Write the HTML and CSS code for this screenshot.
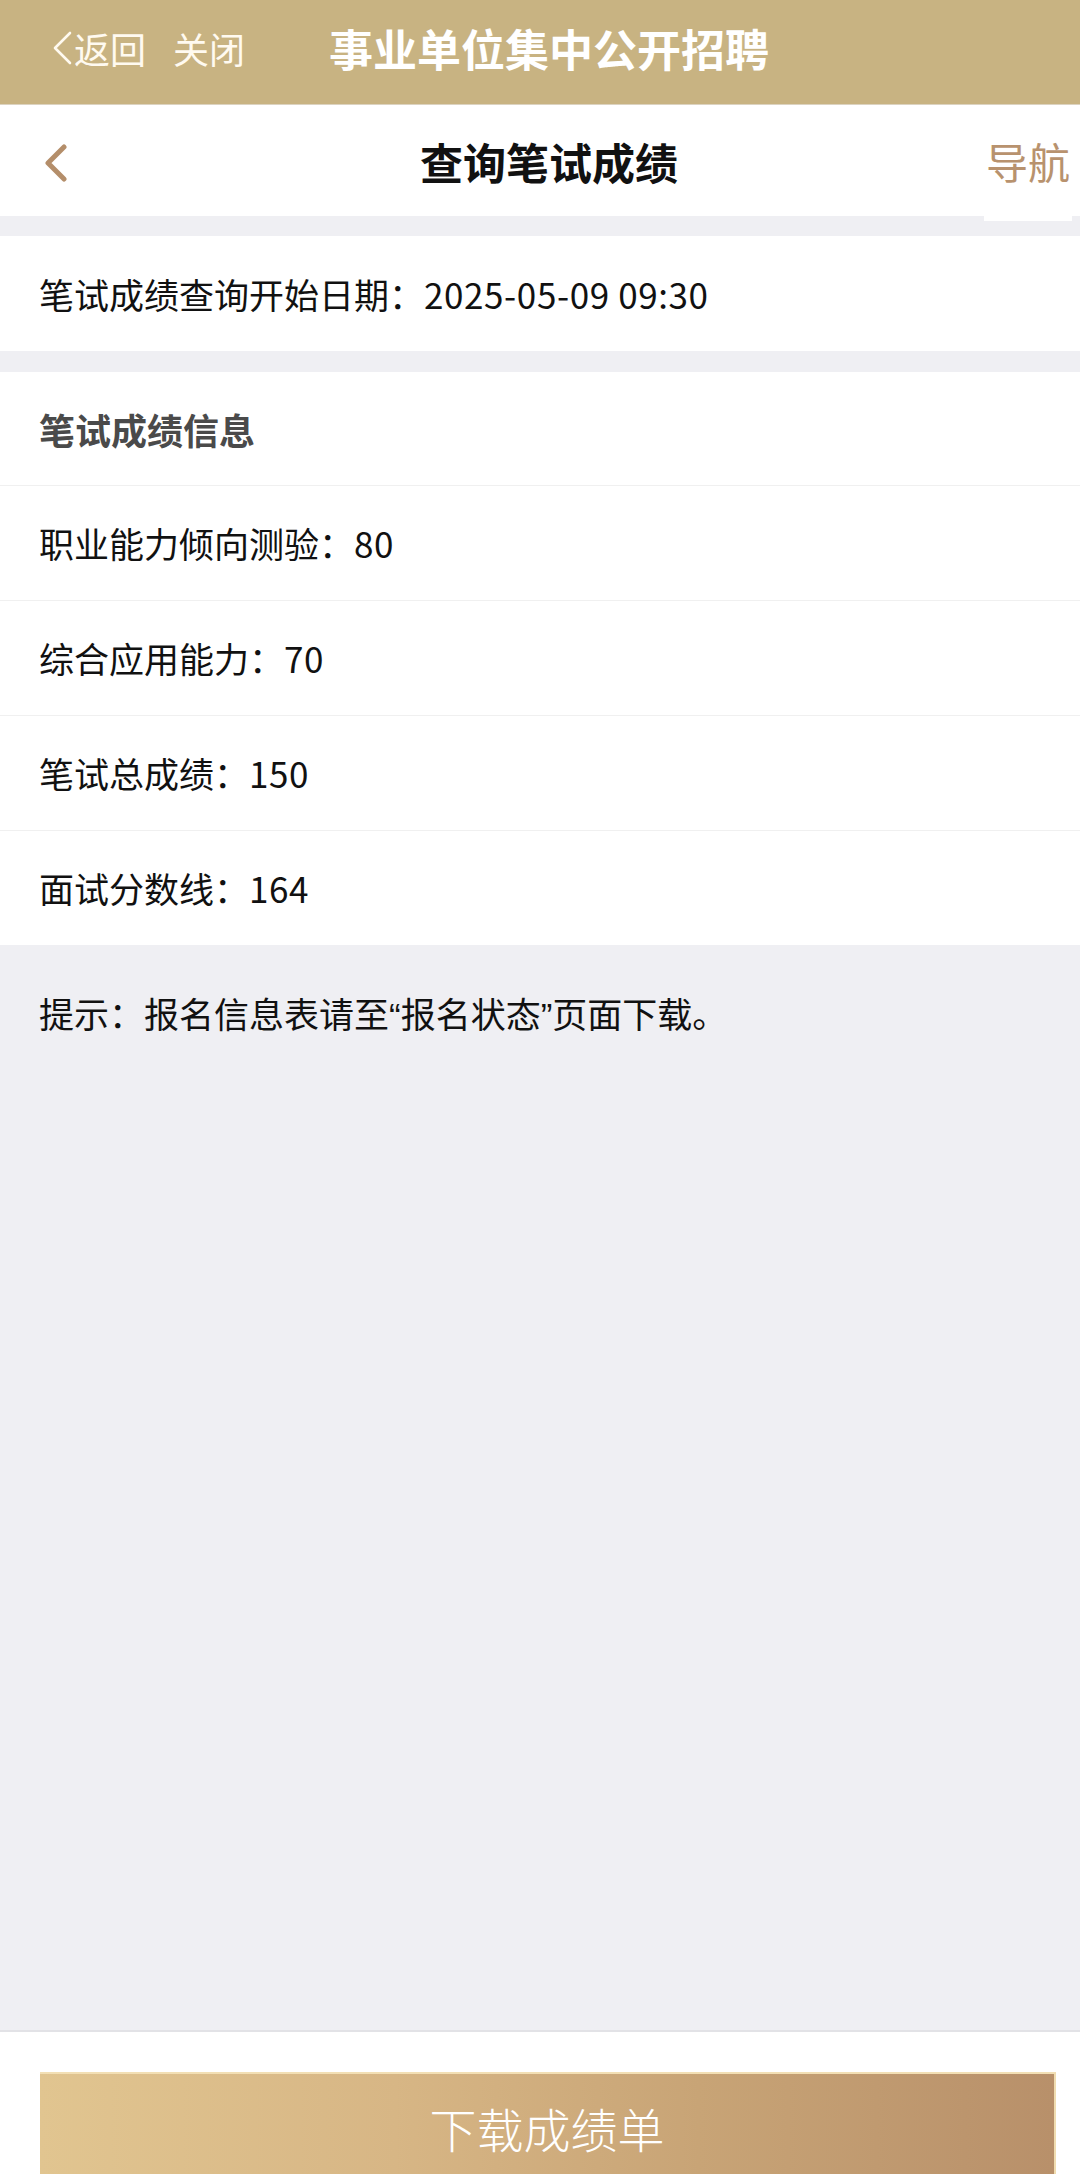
FILE: index.html
```html
<!DOCTYPE html>
<html lang="zh-CN">
<head>
<meta charset="utf-8">
<title>查询笔试成绩</title>
<link rel="stylesheet" href="styles.css">
</head>
<body>
<div class="page">
  <header class="topbar">
    <div class="top-left">
      <span class="back">
        <svg class="back-ico" viewBox="0 0 24 34" width="24" height="34"><path d="M20 2 L5 17 L20 32" fill="none" stroke="#fffaf0" stroke-width="2.6" stroke-linecap="round" stroke-linejoin="round"/></svg>返回
      </span>
      <span class="close">关闭</span>
    </div>
    <div class="top-title">事业单位集中公开招聘</div>
  </header>

  <nav class="navbar">
    <div class="nav-back">
      <svg viewBox="0 0 26 38" width="26" height="38"><path d="M21 3 L5 19 L21 35" fill="none" stroke="#b48e6a" stroke-width="5" stroke-linecap="round" stroke-linejoin="round"/></svg>
    </div>
    <div class="nav-title">查询笔试成绩</div>
    <div class="nav-right">导航</div>
  </nav>

  <main class="content">
    <section class="card date-card">
      <div class="row">笔试成绩查询开始日期：<span class="num">2025-05-09 09:30</span></div>
    </section>

    <section class="card score-card">
      <div class="row head">笔试成绩信息</div>
      <div class="row">职业能力倾向测验：<span class="num">80</span></div>
      <div class="row">综合应用能力：<span class="num">70</span></div>
      <div class="row">笔试总成绩：<span class="num">150</span></div>
      <div class="row">面试分数线：<span class="num">164</span></div>
    </section>

    <p class="tip">提示：报名信息表请至<span class="q">“</span>报名状态<span class="q">”</span>页面下载。</p>
  </main>

  <footer class="footer">
    <button class="dl-btn">下载成绩单</button>
  </footer>
</div>
</body>
</html>
```
FILE: styles.css
```css
* { box-sizing: border-box; }
html, body {
  margin: 0;
  padding: 0;
  background: #efeff3;
}
body {
  font-family: "Noto Sans CJK SC", "Noto Sans", sans-serif;
  color: #111;
}
.page {
  width: 1080px;
  height: 2174px;
  display: flex;
  flex-direction: column;
  overflow: hidden;
}
.topbar {
  height: 104px;
  flex: none;
  background: #c8b382;
  display: flex;
  align-items: center;
  padding-left: 50px;
  padding-bottom: 8px;
  color: #fffaf0;
}
.top-left {
  display: flex;
  align-items: center;
  font-size: 36px;
  line-height: 44px;
  width: 279px;
}
.back {
  display: flex;
  align-items: center;
}
.back-ico {
  margin-right: 0;
}
.close {
  margin-left: 27px;
}
.top-title {
  font-size: 44px;
  font-weight: 700;
  line-height: 56px;
  color: #fff;
}
.navbar {
  height: 112px;
  flex: none;
  background: #fff;
  display: flex;
  align-items: center;
  position: relative;
  border-top: 1px solid #dcd3c0;
}
.nav-back {
  width: 420px;
  padding-left: 43px;
  display: flex;
  align-items: center;
  padding-top: 4px;
}
.nav-title {
  font-size: 43px;
  font-weight: 700;
  line-height: 56px;
  color: #111;
  width: 520px;
}
.nav-right {
  font-size: 42px;
  line-height: 56px;
  color: #b8926e;
  margin-left: 46px;
  position: relative;
}
.nav-right::after {
  content: "";
  position: absolute;
  left: -2px;
  right: -2px;
  bottom: -32px;
  height: 6px;
  background: #fff;
}
.content {
  flex: 1;
  padding-top: 20px;
  background: #efeff3;
}
.card {
  background: #fff;
}
.date-card {
  margin-bottom: 21px;
}
.row {
  height: 115px;
  display: flex;
  align-items: center;
  padding-left: 39px;
  font-size: 35px;
  line-height: 44px;
  color: #111;
  border-top: 1px solid #f0f0f0;
  white-space: pre;
}
.num {
  letter-spacing: 0.6px;
}
.date-card .row,
.score-card .row.head {
  border-top: none;
}
.score-card .row.head {
  height: 113px;
  font-size: 36px;
  font-weight: 700;
  color: #4a4a4a;
}
.tip {
  margin: 0;
  padding: 46px 0 0 39px;
  font-size: 35px;
  line-height: 44px;
  color: #111;
}
.q {
  font-family: "Liberation Sans", sans-serif;
}
.footer {
  height: 144px;
  flex: none;
  background: #fff;
  border-top: 2px solid #e2e2e6;
  padding: 40px 24px 0 40px;
  overflow: hidden;
}
.dl-btn {
  display: block;
  width: 100%;
  height: 116px;
  border: none;
  border-top: 2px solid #f2dfb4;
  border-right: 2px solid #f0dcb0;
  border-radius: 0;
  background: linear-gradient(90deg, #e1c590 0%, #d7b685 35%, #c8a476 65%, #b8906a 100%);
  color: #fff;
  font-family: "Noto Sans CJK SC", "Noto Sans", sans-serif;
  font-size: 47px;
  font-weight: 300;
  line-height: 60px;
  padding: 0 0 6px 0;
  text-align: center;
}
```
